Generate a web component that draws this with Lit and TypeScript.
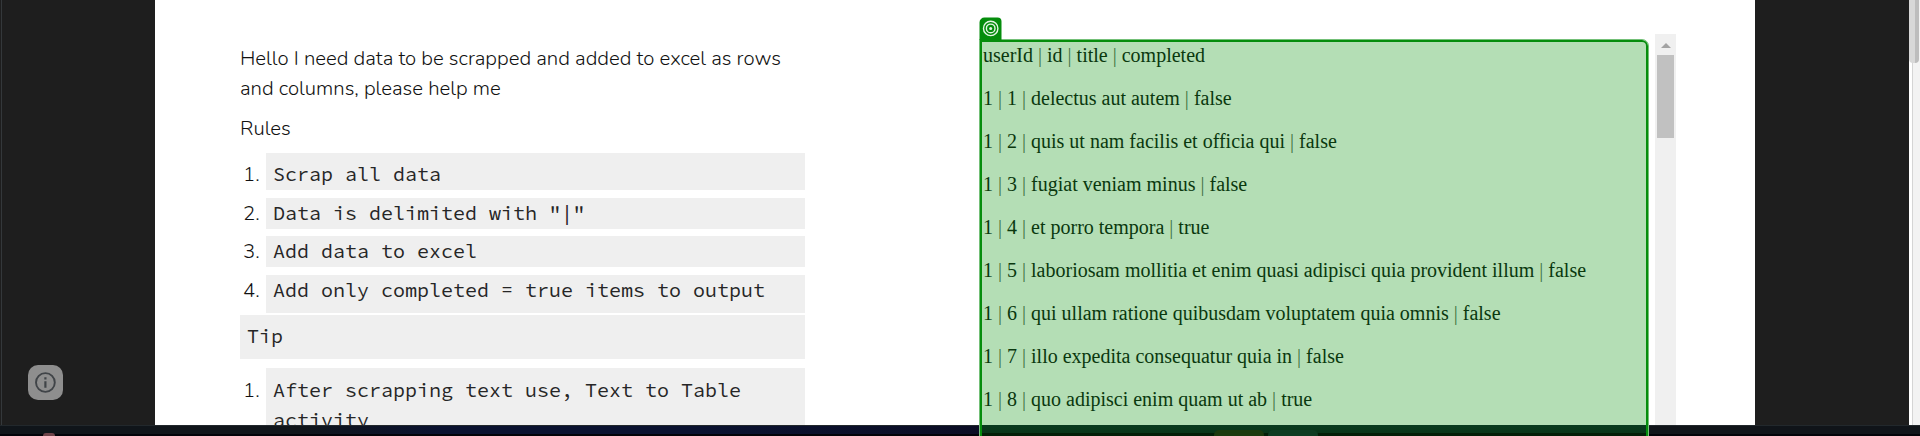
import { LitElement, html, css } from "lit";
import { customElement } from "lit/decorators.js";

const ROWS = [
  "userId | id | title | completed",
  "1 | 1 | delectus aut autem | false",
  "1 | 2 | quis ut nam facilis et officia qui | false",
  "1 | 3 | fugiat veniam minus | false",
  "1 | 4 | et porro tempora | true",
  "1 | 5 | laboriosam mollitia et enim quasi adipisci quia provident illum | false",
  "1 | 6 | qui ullam ratione quibusdam voluptatem quia omnis | false",
  "1 | 7 | illo expedita consequatur quia in | false",
  "1 | 8 | quo adipisci enim quam ut ab | true",
];

const RULES = ["Scrap all data", 'Data is delimited with "|"', "Add data to excel", "Add only completed = true items to output"];

@customElement("app-root")
export class AppRoot extends LitElement {
  static styles = css`
    :host { display: block; position: relative; width: 1920px; height: 436px; overflow: hidden; background: #fff; color: #111; }
    * { box-sizing: border-box; }
    .view { display: grid; grid-template-columns: 2px 153px 1600px 154px 11px; grid-template-rows: 425px; height: 425px; overflow: hidden; }
    .edge { background: linear-gradient(90deg, #1e1e1e 1px, #34383b 1px); }
    .dark { background: #1e1e1e; }
    .left { padding: 365px 0 0 26px; }
    .info { display: block; }
    .page { display: grid; grid-template-columns: 564px 1fr 21px; padding: 34px 79px 0 86px; background: #fff; }
    .text { font: 300 20.33px/30px "Nunito", "Nunito Sans", "Open Sans", sans-serif; padding-top: 9px; margin-left: -1px; }
    .copy { margin: 0 0 10px; white-space: nowrap; }
    .item { display: grid; grid-template-columns: 26px 1fr; margin-bottom: 7px; }
    .num { padding-left: 3px; white-space: nowrap; }
    .code { background: #efefef; color: #262626; padding: 0 7px; font: 400 20px/30px "Source Code Pro", "Liberation Mono", monospace; white-space: nowrap; }
    .item .code { height: 31px; }
    .first .code { height: 37px; padding-top: 6px; }
    .first .num { padding-top: 6px; }
    .first { margin-bottom: 8px; }
    .item:nth-child(3) { margin-bottom: 8px; }
    .last { margin-bottom: 2px; }
    .last .code { height: 38px; }
    .tip { height: 44px; padding-top: 6px; margin-bottom: 9px; }
    .more .code { height: 80px; padding-top: 7px; }
    .more .num { padding-top: 7px; }
    .scroll { background: #f0f0f0; height: 391px; padding: 9px 2px 0; }
    .arrow { display: block; margin: 0 auto 7px; }
    .thumb { height: 83px; background: #c1c1c1; }
    .rail { background: linear-gradient(90deg, #fff 3px, #d2d2d2 3px, #d8d8d8 4px, #f3f3f3 4px); }
    .grip { width: 10px; height: 63px; border-radius: 0 0 4px 4px; background: linear-gradient(90deg, #d8d8d8 6px, #bdbdbd 6px); }
    .taskbar { display: flex; height: 11px; border-top: 1px solid #22282c; background: linear-gradient(transparent 8px, #020309 8px), linear-gradient(90deg, #10151a, #10151a 300px, #0a1230 440px, #0a1230 700px, #0b0d24 980px, #101419 1650px, #101419); }
    .dot { width: 12px; height: 3px; margin: 7px 0 0 43px; border-radius: 7px 7px 0 0; background: #70444a; }
    .overlay { position: absolute; left: 979px; top: 39px; width: 670px; height: 420px; border: 1px solid #74c078; border-radius: 0 7px 0 0; }
    .frame { height: 418px; border: 2px solid #058d0c; border-radius: 0 6px 0 0; background: linear-gradient(#b4deb5 383px, #093b1e 383px, #093519 391px, #031f08 391px); color: #0a380e; }
    .rows { display: grid; grid-auto-rows: 43px; padding: 2px 0 0 1px; height: 383px; overflow: hidden; font: 20px/23px "Liberation Serif", serif; white-space: nowrap; }
    .bar { color: #3f7443; }
    .tabs { display: flex; gap: 4px; padding: 5px 0 0 232px; }
    .tab { width: 50px; height: 6px; border-radius: 5px 5px 0 0; background: #1c3a0e; }
    .pale { background: #0e3c22; }
    .badge { position: absolute; left: 979px; top: 17px; width: 23px; height: 23px; }
  `;

  private pipes(text: string) {
    return text.split("|").map((part, i) => (i ? html`<span class="bar">|</span>${part}` : part));
  }

  render() {
    return html`
      <div class="view">
        <div class="edge"></div>
        <div class="dark left">
          <svg class="info" width="35" height="35" viewBox="0 0 35 35">
            <rect width="35" height="35" rx="10" fill="#8e8e8e" />
            <circle cx="17.4" cy="17.5" r="9.4" fill="none" stroke="#404448" stroke-width="1.9" />
            <path d="M17.4 16.3v6.5M17.4 12.3v2.2" stroke="#404448" stroke-width="2.2" />
          </svg>
        </div>
        <main class="page">
          <section class="text">
            <p class="copy">Hello I need data to be scrapped and added to excel as rows<br />and columns, please help me</p>
            <p class="copy">Rules</p>
            <div>
              ${RULES.map((t, i) => html`<div class="item ${i === 0 ? "first" : i === 3 ? "last" : ""}"><span class="num">${i + 1}.</span><div class="code">${t}</div></div>`)}
            </div>
            <div class="code tip">Tip</div>
            <div class="item more"><span class="num">1.</span><div class="code">After scrapping text use, Text to Table<br />activity</div></div>
          </section>
          <div></div>
          <div class="scroll">
            <svg class="arrow" width="10" height="5"><path d="M0 5 5 0l5 5z" fill="#a3a3a3" /></svg>
            <div class="thumb"></div>
          </div>
        </main>
        <div class="dark"></div>
        <div class="rail"><div class="grip"></div></div>
      </div>
      <div class="taskbar"><div class="dot"></div></div>
      <div class="overlay">
        <div class="frame">
          <div class="rows">${ROWS.map((t) => html`<div>${this.pipes(t)}</div>`)}</div>
          <div class="tabs"><div class="tab"></div><div class="tab pale"></div></div>
        </div>
      </div>
      <svg class="badge" viewBox="0 0 23 23">
        <path d="M.5 23V5.5a5 5 0 0 1 5-5h13a4 4 0 0 1 4 4V23z" fill="#058d0c" />
        <g fill="none" stroke="#e4f5e4" stroke-width="1.4"><circle cx="11.7" cy="11.4" r="7.2" /><circle cx="11.7" cy="11.4" r="4.3" /></g>
        <circle cx="11.7" cy="11.4" r="1.5" fill="#e4f5e4" />
      </svg>
    `;
  }
}
